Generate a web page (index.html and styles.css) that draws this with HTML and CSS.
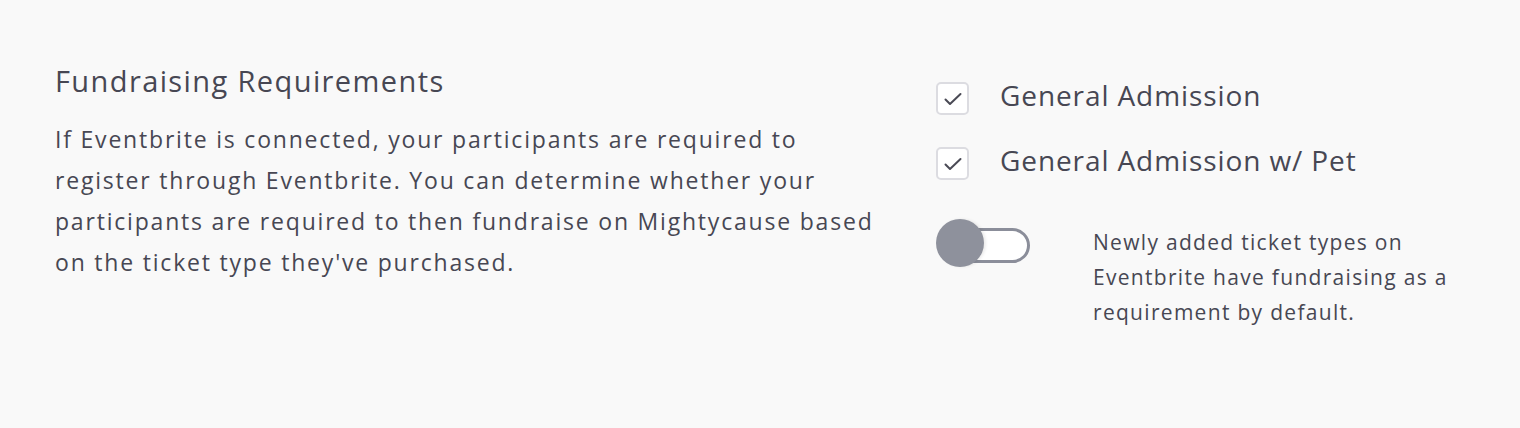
FILE: index.html
```html
<!DOCTYPE html>
<html lang="en">
<head>
  <meta charset="UTF-8">
  <meta name="viewport" content="width=device-width, initial-scale=1.0">
  <title>Fundraising Requirements</title>
  <link rel="stylesheet" href="styles.css">
</head>
<body>
  <section class="settings">
    <div class="intro">
      <h2>Fundraising Requirements</h2>
      <p>If Eventbrite is connected, your participants are required to register through Eventbrite. You can determine whether your participants are required to then fundraise on Mightycause based on the ticket type they've purchased.</p>
    </div>

    <div class="options">
      <label class="ticket">
        <span class="checkbox">
          <svg viewBox="0 0 20 20" width="20" height="20"><path d="M2.5 10.5l4.5 4.5 10.5-10" fill="none" stroke="#4a4a55" stroke-width="2" stroke-linecap="round" stroke-linejoin="round"/></svg>
        </span>
        <span class="ticket-name">General Admission</span>
      </label>
      <label class="ticket">
        <span class="checkbox">
          <svg viewBox="0 0 20 20" width="20" height="20"><path d="M2.5 10.5l4.5 4.5 10.5-10" fill="none" stroke="#4a4a55" stroke-width="2" stroke-linecap="round" stroke-linejoin="round"/></svg>
        </span>
        <span class="ticket-name">General Admission w/ Pet</span>
      </label>

      <div class="default-row">
        <span class="toggle"><span class="knob"></span></span>
        <p>Newly added ticket types on Eventbrite have fundraising as a requirement by default.</p>
      </div>
    </div>
  </section>
</body>
</html>
```

FILE: styles.css
```css
body {
  margin: 0;
  background-color: #f9f9f9;
  font-family: "Open Sans", sans-serif;
  color: #474753;
}

.settings {
  display: flex;
  padding: 63px 40px 0 55px;
  height: 365px;
}

.intro {
  width: 835px;
  flex-shrink: 0;
}

.intro h2 {
  margin: 0 0 20px;
  font-size: 29px;
  font-weight: 400;
  letter-spacing: 1.4px;
  line-height: 36px;
}

.intro p {
  margin: 0;
  font-size: 23px;
  letter-spacing: 1.8px;
  line-height: 41px;
}

.options {
  margin-left: 46px;
  padding-top: 19px;
}

.ticket {
  display: flex;
  align-items: center;
  gap: 31px;
  height: 33px;
  margin-bottom: 32px;
  font-size: 28px;
  letter-spacing: 0.9px;
}

.ticket-name {
  margin-bottom: 8px;
}

.checkbox {
  width: 29px;
  height: 29px;
  border: 2px solid #dcdce1;
  border-radius: 5px;
  background-color: #fff;
  display: flex;
  align-items: center;
  justify-content: center;
}

.default-row {
  display: flex;
  gap: 63px;
  padding-top: 9px;
}

.toggle {
  position: relative;
  flex-shrink: 0;
  width: 74px;
  height: 29px;
  margin: 7px 0 0 14px;
  border: 3px solid #8b8e9a;
  border-radius: 18px;
  background-color: #fff;
}

.knob {
  position: absolute;
  left: -17px;
  top: -12px;
  width: 48px;
  height: 48px;
  border-radius: 50%;
  background-color: #8e919c;
  box-shadow: 2px 0 3px rgba(0, 0, 0, 0.08);
}

.default-row p {
  margin: 4px 0 0;
  width: 390px;
  font-size: 21px;
  letter-spacing: 1.3px;
  line-height: 35px;
}
```
